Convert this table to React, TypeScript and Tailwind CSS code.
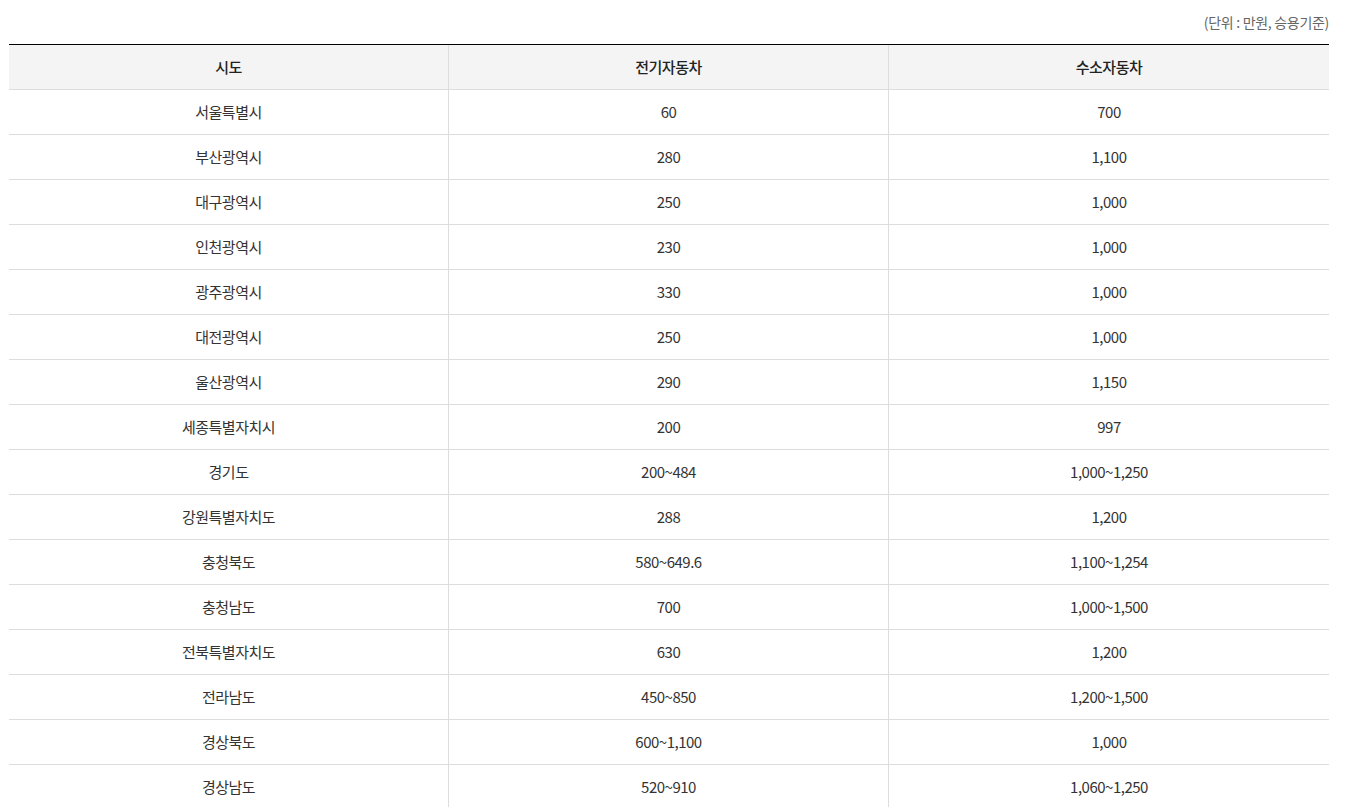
import React from "react";

const rows: [string, string, string][] = [
  ["서울특별시", "60", "700"],
  ["부산광역시", "280", "1,100"],
  ["대구광역시", "250", "1,000"],
  ["인천광역시", "230", "1,000"],
  ["광주광역시", "330", "1,000"],
  ["대전광역시", "250", "1,000"],
  ["울산광역시", "290", "1,150"],
  ["세종특별자치시", "200", "997"],
  ["경기도", "200~484", "1,000~1,250"],
  ["강원특별자치도", "288", "1,200"],
  ["충청북도", "580~649.6", "1,100~1,254"],
  ["충청남도", "700", "1,000~1,500"],
  ["전북특별자치도", "630", "1,200"],
  ["전라남도", "450~850", "1,200~1,500"],
  ["경상북도", "600~1,100", "1,000"],
  ["경상남도", "520~910", "1,060~1,250"],
];

export default function App() {
  return (
    <div
      className="bg-white min-h-screen pl-[9px] pr-[21px] text-[#333]"
      style={{ fontFamily: '"Noto Sans CJK KR", "Noto Sans", sans-serif' }}
    >
      <div className="h-[44px] flex items-center justify-end text-[14px] text-[#666] tracking-[-0.3px]">
        (단위 : 만원, 승용기준)
      </div>
      <div className="border-t border-black">
        <div className="grid grid-cols-3 bg-[#f4f4f4] border-b border-[#dddddd]">
          {["시도", "전기자동차", "수소자동차"].map((h, i) => (
            <div
              key={h}
              className={`h-[44px] flex items-center justify-center text-[15px] font-medium tracking-[-0.5px] text-[#222] ${
                i < 2 ? "border-r border-[#dddddd]" : ""
              }`}
            >
              {h}
            </div>
          ))}
        </div>
        {rows.map((r) => (
          <div key={r[0]} className="grid grid-cols-3 border-b border-[#dddddd]">
            {r.map((c, i) => (
              <div
                key={i}
                className={`h-[44px] flex items-center justify-center text-[15px] tracking-[-0.5px] ${
                  i < 2 ? "border-r border-[#dddddd]" : ""
                }`}
              >
                {c}
              </div>
            ))}
          </div>
        ))}
      </div>
    </div>
  );
}
